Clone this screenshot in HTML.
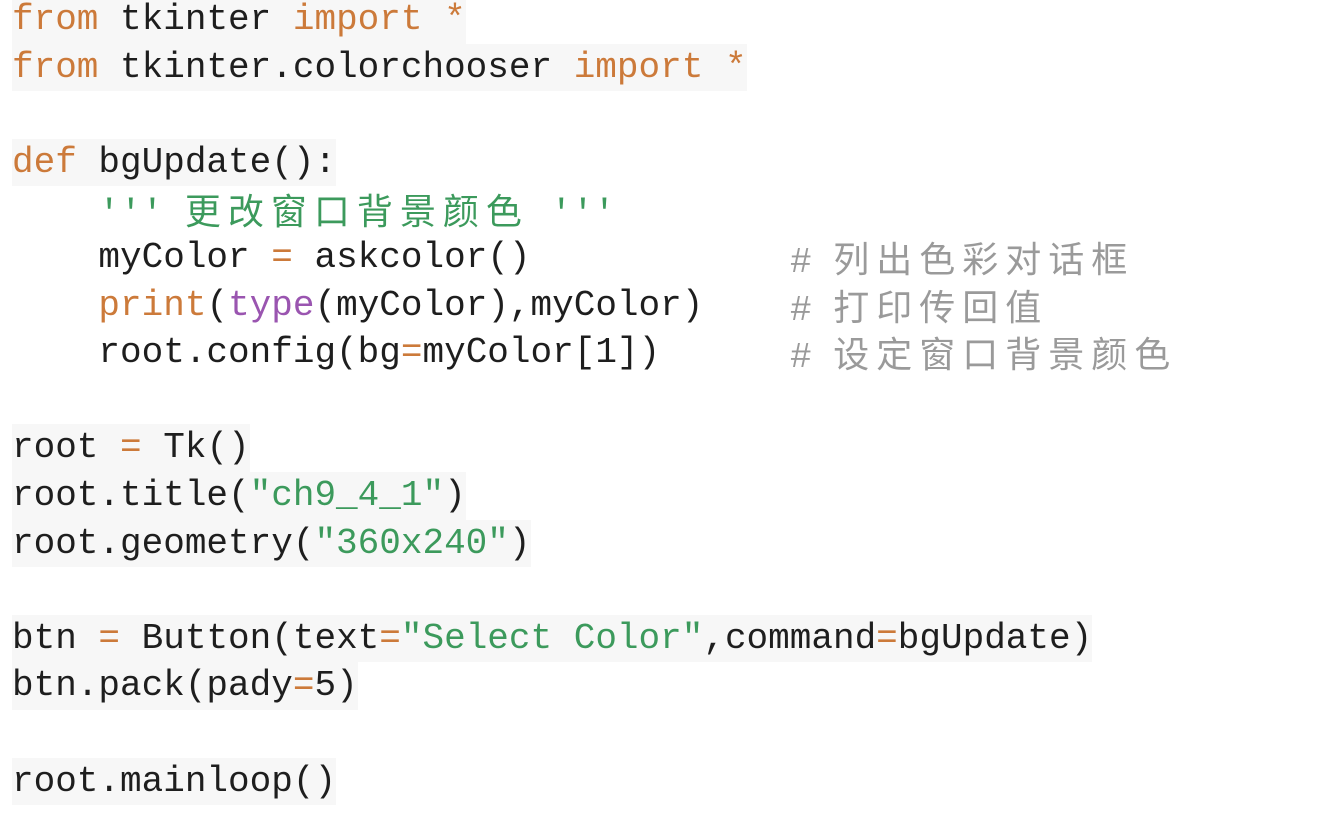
<!DOCTYPE html>
<html><head><meta charset="utf-8"><style>
html,body{margin:0;padding:0;background:#fff;width:1330px;height:814px;overflow:hidden}
pre,.cm{position:absolute;margin:0;font-family:"Liberation Mono","Noto Sans CJK SC",monospace;font-size:36px;line-height:47.6px;color:#1e1e1e;white-space:pre}
pre{left:12px;top:-4px}
.cm{left:790px;color:#9a9a9a}
.ln{display:block;height:47.6px;line-height:47.6px;overflow:visible}
.l{background:#f7f7f7;display:inline-block;height:47.6px;vertical-align:top}
.k{color:#cc7a3a}.s{color:#3c9a5c}.p{color:#9a55b0}
.cj{font-family:"Noto Sans CJK SC",sans-serif;letter-spacing:7px;font-size:36px;line-height:47.6px}
.g{color:#cc7a3a}
</style></head><body>
<pre><span class="ln"><span class="l"><span class="k">from</span> tkinter <span class="k">import</span> <span class="k">*</span></span></span><span class="ln"><span class="l"><span class="k">from</span> tkinter.colorchooser <span class="k">import</span> <span class="k">*</span></span></span><span class="ln"></span><span class="ln"><span class="l"><span class="k">def</span> bgUpdate():</span></span><span class="ln">    <span class="s">''' <span class="cj">更改窗口背景颜色</span> '''</span></span><span class="ln">    myColor <span class="g">=</span> askcolor()</span><span class="ln">    <span class="k">print</span>(<span class="p">type</span>(myColor),myColor)</span><span class="ln">    root.config(bg<span class="g">=</span>myColor[1])</span><span class="ln"></span><span class="ln"><span class="l">root <span class="g">=</span> Tk()</span></span><span class="ln"><span class="l">root.title(<span class="s">"ch9_4_1"</span>)</span></span><span class="ln"><span class="l">root.geometry(<span class="s">"360x240"</span>)</span></span><span class="ln"></span><span class="ln"><span class="l">btn <span class="g">=</span> Button(text<span class="g">=</span><span class="s">"Select Color"</span>,command<span class="g">=</span>bgUpdate)</span></span><span class="ln"><span class="l">btn.pack(pady<span class="g">=</span>5)</span></span><span class="ln"></span><span class="ln"><span class="l">root.mainloop()</span></span></pre>
<div class="cm" style="top:234px"># <span class="cj">列出色彩对话框</span></div>
<div class="cm" style="top:281.6px"># <span class="cj">打印传回值</span></div>
<div class="cm" style="top:329.2px"># <span class="cj">设定窗口背景颜色</span></div>
</body></html>
